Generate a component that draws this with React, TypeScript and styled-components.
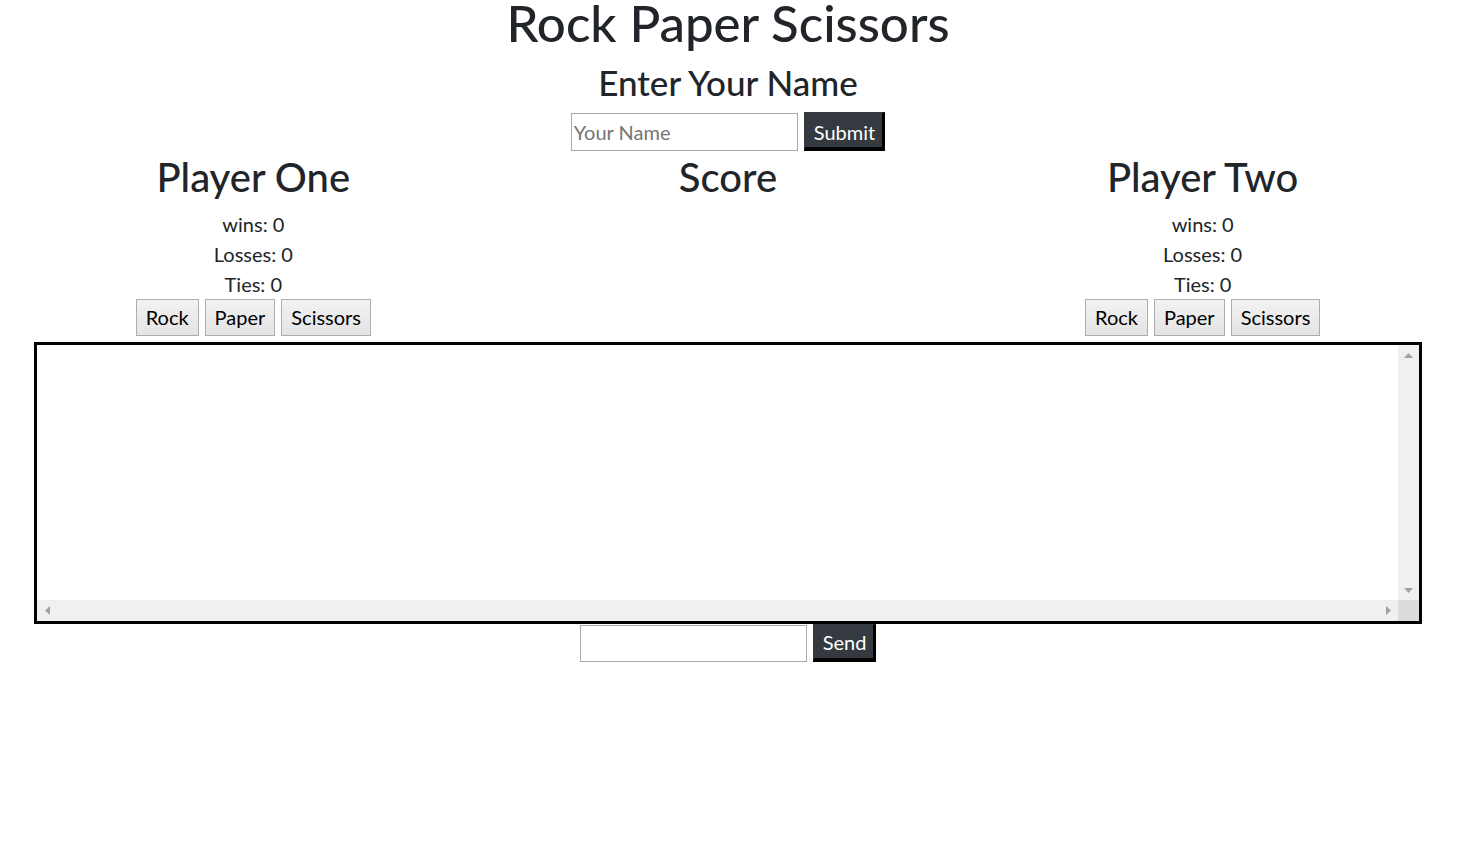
import React from "react";
import styled, { createGlobalStyle } from "styled-components";

const GlobalStyle = createGlobalStyle`
  body {
    margin: 0;
    background: #fff;
    color: #212529;
    font-family: Lato, "Noto Sans", sans-serif;
  }
  * { box-sizing: border-box; }
`;

const Page = styled.div`
  width: 1456px;
  display: flex;
  flex-direction: column;
`;

const Title = styled.h1`
  margin: 0;
  font-size: 51px;
  font-weight: 500;
  line-height: 46px;
  text-align: center;
`;

const Subtitle = styled.h3`
  margin: 15px 0 9px;
  font-size: 35px;
  font-weight: 500;
  line-height: 42px;
  text-align: center;
`;

const InlineForm = styled.form<{ $height: number }>`
  display: flex;
  justify-content: center;
  align-items: center;
  gap: 6px;
  height: ${(p) => p.$height}px;
  margin: 0;
`;

const TextInput = styled.input<{ $height: number }>`
  width: 227px;
  height: ${(p) => p.$height}px;
  border: 1px solid #a9a9a9;
  padding: 1px 2px;
  font-family: Lato, "Noto Sans", sans-serif;
  font-size: 20px;
  color: #212529;
  outline: none;
  &::placeholder { color: #757575; }
`;

const DarkButton = styled.button<{ $height: number; $top: number }>`
  height: ${(p) => p.$height}px;
  padding: ${(p) => p.$top}px 7px 0 9px;
  background: #343a40;
  color: #fff;
  border-style: solid;
  border-width: 1px 3px 4px 1px;
  border-color: #343a40 #000 #000 #343a40;
  font-family: Lato, "Noto Sans", sans-serif;
  font-size: 20px;
  line-height: 1;
`;

const Columns = styled.div`
  display: grid;
  grid-template-columns: repeat(3, 1fr);
  padding: 2px 16px 0;
`;

const Column = styled.section`
  display: flex;
  flex-direction: column;
  align-items: center;
`;

const ColumnTitle = styled.h2`
  margin: 0 0 8px;
  font-size: 40px;
  font-weight: 500;
  line-height: 48px;
`;

const Stat = styled.p`
  margin: 0;
  font-size: 20px;
  line-height: 30px;
`;

const ChoiceRow = styled.div`
  display: flex;
  gap: 6px;
`;

const ChoiceButton = styled.button`
  height: 37px;
  padding: 0 9px 1px;
  border: 1px solid #adadad;
  background: linear-gradient(#f2f2f2, #e4e4e4);
  color: #000;
  font-family: Lato, "Noto Sans", sans-serif;
  font-size: 20px;
  line-height: 1;
`;

const ChatBox = styled.div`
  margin: 6px 34px 0;
  height: 282px;
  border: 3px solid #000;
  display: grid;
  grid-template-columns: 1fr 21px;
  grid-template-rows: 1fr 21px;
`;

const ChatLog = styled.div`
  background: #fff;
`;

const ScrollTrack = styled.div<{ $vertical?: boolean }>`
  background: #f0f0f0;
  display: flex;
  flex-direction: ${(p) => (p.$vertical ? "column" : "row")};
  justify-content: space-between;
  align-items: center;
`;

const ScrollButton = styled.div`
  width: 20px;
  height: 20px;
  display: flex;
  align-items: center;
  justify-content: center;
`;

const Corner = styled.div`
  background: #dcdcdc;
`;

type Dir = "up" | "down" | "left" | "right";

const Arrow = ({ dir }: { dir: Dir }) => {
  const pts: Record<Dir, string> = {
    up: "4.5,0 9,5 0,5",
    down: "0,0 9,0 4.5,5",
    left: "5,0 5,9 0,4.5",
    right: "0,0 5,4.5 0,9",
  };
  const vertical = dir === "up" || dir === "down";
  return (
    <svg width={vertical ? 9 : 5} height={vertical ? 5 : 9} viewBox={vertical ? "0 0 9 5" : "0 0 5 9"}>
      <polygon points={pts[dir]} fill="#a0a0a0" />
    </svg>
  );
};

const Player = ({ name }: { name: string }) => (
  <Column>
    <ColumnTitle>{name}</ColumnTitle>
    <Stat>wins: 0</Stat>
    <Stat>Losses: 0</Stat>
    <Stat>Ties: 0</Stat>
    <ChoiceRow>
      <ChoiceButton>Rock</ChoiceButton>
      <ChoiceButton>Paper</ChoiceButton>
      <ChoiceButton>Scissors</ChoiceButton>
    </ChoiceRow>
  </Column>
);

export default function App() {
  return (
    <>
      <GlobalStyle />
      <Page>
        <Title>Rock Paper Scissors</Title>
        <Subtitle>Enter Your Name</Subtitle>
        <InlineForm $height={39} onSubmit={(e) => e.preventDefault()}>
          <TextInput $height={38} placeholder="Your Name" />
          <DarkButton $height={39} $top={3} type="submit">Submit</DarkButton>
        </InlineForm>
        <Columns>
          <Player name="Player One" />
          <Column>
            <ColumnTitle>Score</ColumnTitle>
          </Column>
          <Player name="Player Two" />
        </Columns>
        <ChatBox>
          <ChatLog />
          <ScrollTrack $vertical>
            <ScrollButton><Arrow dir="up" /></ScrollButton>
            <ScrollButton><Arrow dir="down" /></ScrollButton>
          </ScrollTrack>
          <ScrollTrack>
            <ScrollButton><Arrow dir="left" /></ScrollButton>
            <ScrollButton><Arrow dir="right" /></ScrollButton>
          </ScrollTrack>
          <Corner />
        </ChatBox>
        <InlineForm $height={38} onSubmit={(e) => e.preventDefault()}>
          <TextInput $height={37} />
          <DarkButton $height={38} $top={1} type="submit">Send</DarkButton>
        </InlineForm>
      </Page>
    </>
  );
}
